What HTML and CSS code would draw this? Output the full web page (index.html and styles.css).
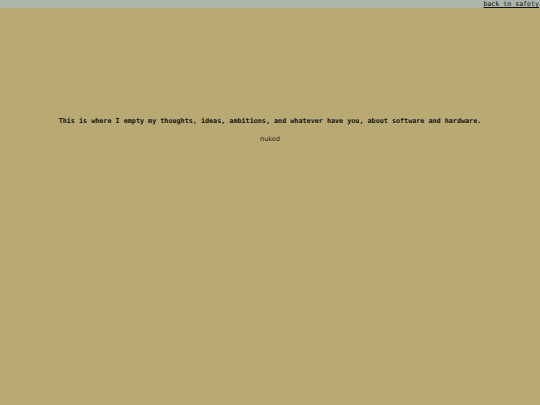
FILE: index.html
```html
<!DOCTYPE html>
<html>
<head>
<meta charset="utf-8">
<link rel="stylesheet" href="styles.css">
</head>
<body>
<div class="topbar"><a class="back" href="#">back to safety</a></div>
<main class="content">
<h1 class="intro">This is where I empty my thoughts, ideas, ambitions, and whatever have you, about software and hardware.</h1>
<p class="post">nuked</p>
</main>
</body>
</html>
```
FILE: styles.css
```css
html, body {
  margin: 0;
  padding: 0;
  height: 100%;
  background: #b9aa74;
}
body {
  font-family: "DejaVu Sans Mono", monospace;
}
.topbar {
  background: #abb6aa;
  height: 8px;
  display: flex;
  justify-content: flex-end;
  align-items: center;
  padding-right: 1px;
}
.back {
  font-family: "DejaVu Sans Mono", monospace;
  font-size: 6.6px;
  line-height: 8px;
  color: #111;
  text-decoration: underline;
}
.content {
  display: flex;
  flex-direction: column;
  align-items: center;
  padding-top: 109px;
}
.intro {
  margin: 0;
  font-family: "DejaVu Sans Mono", monospace;
  font-size: 6.75px;
  font-weight: bold;
  line-height: 8px;
  color: #111;
  text-align: center;
}
.post {
  margin: 10px 0 0;
  font-family: "DejaVu Sans", sans-serif;
  font-size: 6.5px;
  line-height: 8px;
  color: #222;
}
```
